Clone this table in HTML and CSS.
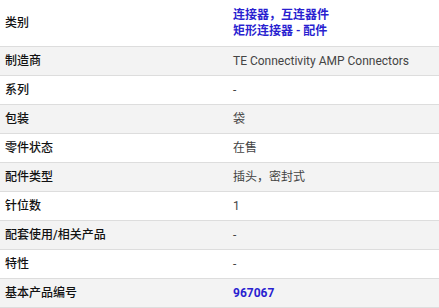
FILE: index.html
```html
<!DOCTYPE html>
<html lang="zh-CN">
<head>
<meta charset="utf-8">
<link rel="stylesheet" href="styles.css">
</head>
<body>
<div class="attrs">
  <div class="row first">
    <div class="label">类别</div>
    <div class="value"><a class="link" href="#">连接器，互连器件</a><br><a class="link" href="#">矩形连接器 - 配件</a></div>
  </div>
  <div class="row alt">
    <div class="label">制造商</div>
    <div class="value">TE Connectivity AMP Connectors</div>
  </div>
  <div class="row">
    <div class="label">系列</div>
    <div class="value">-</div>
  </div>
  <div class="row alt">
    <div class="label">包装</div>
    <div class="value">袋</div>
  </div>
  <div class="row">
    <div class="label">零件状态</div>
    <div class="value">在售</div>
  </div>
  <div class="row alt">
    <div class="label">配件类型</div>
    <div class="value">插头，密封式</div>
  </div>
  <div class="row">
    <div class="label">针位数</div>
    <div class="value">1</div>
  </div>
  <div class="row alt">
    <div class="label">配套使用/相关产品</div>
    <div class="value">-</div>
  </div>
  <div class="row">
    <div class="label">特性</div>
    <div class="value">-</div>
  </div>
  <div class="row alt">
    <div class="label">基本产品编号</div>
    <div class="value"><a class="link bold" href="#">967067</a></div>
  </div>
</div>
</body>
</html>
```
FILE: styles.css
```css
html, body {
  margin: 0;
  padding: 0;
  background: #ffffff;
}
body {
  font-family: Roboto, "Noto Sans CJK SC", sans-serif;
  font-size: 12px;
  line-height: 16px;
  color: #333333;
}
.attrs {
  display: flex;
  flex-direction: column;
}
.row {
  display: grid;
  grid-template-columns: 228px 1fr;
  align-items: center;
  border-bottom: 1px solid #dddddd;
  background: #ffffff;
}
.row.alt {
  background: #f3f3f3;
}
.label, .value {
  padding: 6px 5px;
}
.row.first .label, .row.first .value {
  padding-top: 7px;
  padding-bottom: 7px;
}
.label {
  color: #111111;
  font-weight: 500;
}
.value {
  color: #444444;
}
.link {
  color: #2a1fd0;
  text-decoration: none;
  font-weight: 600;
}
.link.bold {
  font-weight: 700;
}
```
